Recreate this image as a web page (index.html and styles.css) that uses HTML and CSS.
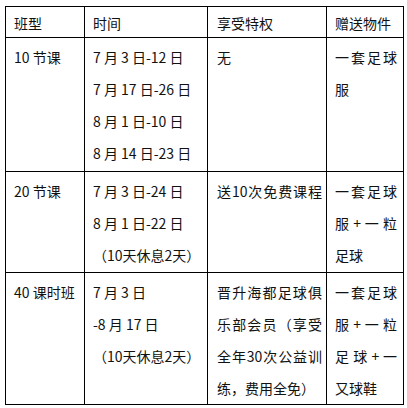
FILE: index.html
```html
<!DOCTYPE html>
<html lang="zh">
<head>
<meta charset="utf-8">
<link rel="stylesheet" href="styles.css">
</head>
<body>
<table class="plan">
  <colgroup>
    <col class="c1"><col class="c2"><col class="c3"><col class="c4">
  </colgroup>
  <tr class="head">
    <td class="p1">班型</td>
    <td class="p2">时间</td>
    <td class="p3">享受特权</td>
    <td class="p4">赠送物件</td>
  </tr>
  <tr class="r1">
    <td class="p1"><div class="ln">10 节课</div></td>
    <td class="p2">
      <div class="ln">7 月 3 日-12 日</div>
      <div class="ln">7 月 17 日-26 日</div>
      <div class="ln">8 月 1 日-10 日</div>
      <div class="ln">8 月 14 日-23 日</div>
    </td>
    <td class="p3"><div class="ln">无</div></td>
    <td class="p4">
      <div class="ln j">一套足球</div>
      <div class="ln">服</div>
    </td>
  </tr>
  <tr class="r2">
    <td class="p1"><div class="ln">20 节课</div></td>
    <td class="p2">
      <div class="ln">7 月 3 日-24 日</div>
      <div class="ln">8 月 1 日-22 日</div>
      <div class="ln">（10天休息2天）</div>
    </td>
    <td class="p3"><div class="ln j">送10次免费课程</div></td>
    <td class="p4">
      <div class="ln j">一套足球</div>
      <div class="ln j">服 + 一 粒</div>
      <div class="ln">足球</div>
    </td>
  </tr>
  <tr class="r3">
    <td class="p1"><div class="ln">40 课时班</div></td>
    <td class="p2">
      <div class="ln">7 月 3 日</div>
      <div class="ln">-8 月 17 日</div>
      <div class="ln">（10天休息2天）</div>
    </td>
    <td class="p3">
      <div class="ln j">晋升海都足球俱</div>
      <div class="ln j">乐部会员（享受</div>
      <div class="ln j">全年30次公益训</div>
      <div class="ln">练，费用全免）</div>
    </td>
    <td class="p4">
      <div class="ln j">一套足球</div>
      <div class="ln j">服 + 一 粒</div>
      <div class="ln j">足 球 + 一</div>
      <div class="ln">又球鞋</div>
    </td>
  </tr>
</table>
</body>
</html>
```

FILE: styles.css
```css
html, body {
  margin: 0;
  padding: 0;
  background: #fff;
}

body {
  font-family: "Noto Sans CJK SC", "DejaVu Sans", sans-serif;
  font-size: 14px;
  color: #111;
}

.plan {
  margin: 6px 0 0 5px;
  width: 398px;
  table-layout: fixed;
  border-collapse: collapse;
  border: 1.5px solid #000;
}

.c1 { width: 79px; }
.c2 { width: 123px; }
.c3 { width: 119px; }
.c4 { width: 77px; }

.plan td {
  border: 1.5px solid #000;
  vertical-align: top;
  overflow: hidden;
}

.head td {
  vertical-align: middle;
  line-height: 20px;
  padding-top: 2px;
}

.head { height: 31px; }
.r1 { height: 134px; }
.r2 { height: 101px; }
.r3 { height: 131px; }

.p1 { padding: 3px 4px 0 8px; }
.p2 { padding: 3px 0 0 8px; }
.p3 { padding: 3px 4px 0 9px; }
.p4 { padding: 3px 6px 0 8px; }

.ln {
  line-height: 32px;
  height: 32px;
  white-space: nowrap;
}

.j {
  text-align: justify;
  text-align-last: justify;
}
```
